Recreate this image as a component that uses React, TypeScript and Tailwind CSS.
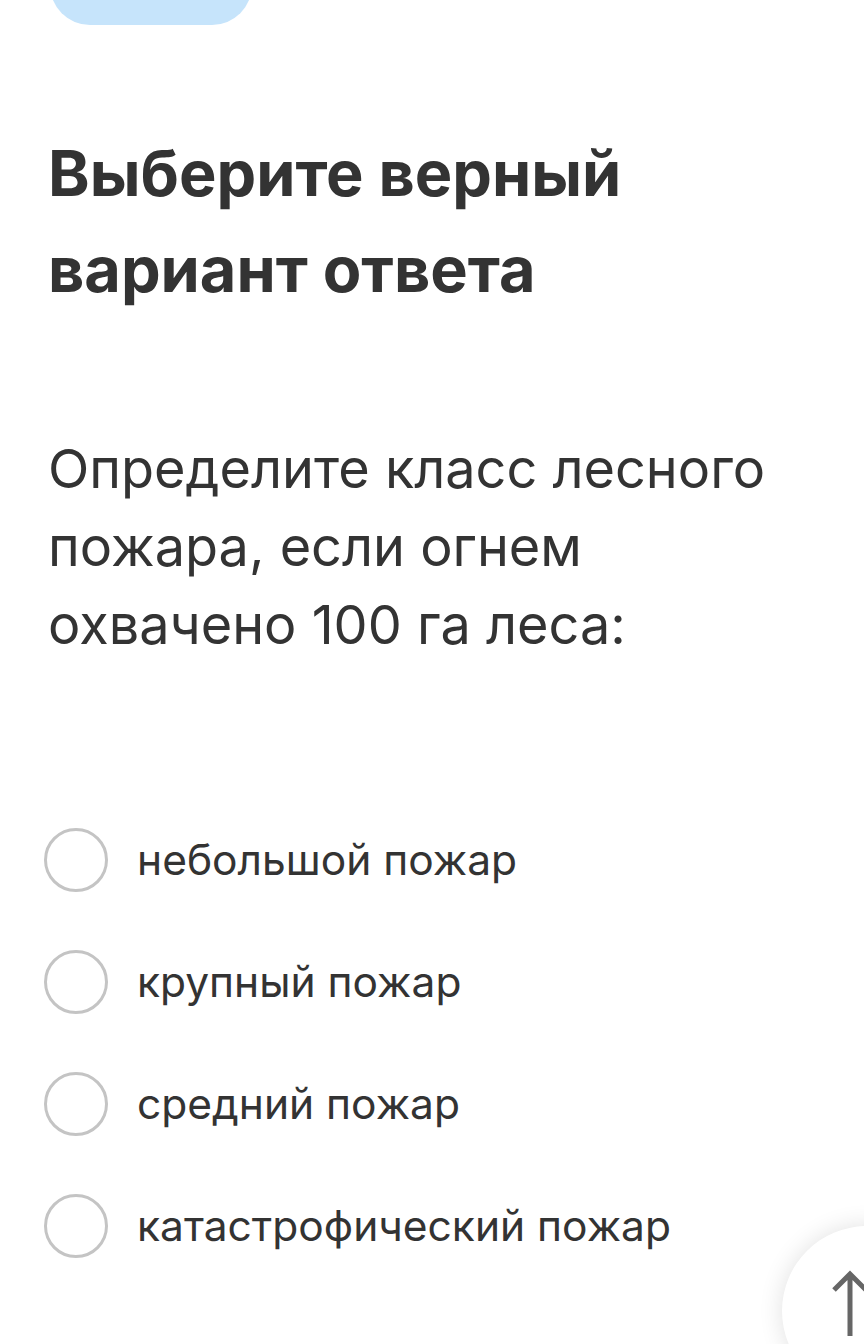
import React from 'react';

const options = ['небольшой пожар', 'крупный пожар', 'средний пожар', 'катастрофический пожар'];

const RadioOption: React.FC<{ label: string }> = ({ label }) => (
  <label className="flex items-center h-[122px] cursor-pointer">
    <span className="w-[64px] h-[64px] rounded-full border-[3px] border-[#c4c4c4] bg-white shrink-0" />
    <span className="ml-[29px] text-[42.5px] leading-none text-[#333333]">{label}</span>
  </label>
);

export default function App() {
  return (
    <div
      className="relative w-[864px] h-[1344px] overflow-hidden bg-white text-[#333333]"
      style={{ fontFamily: 'Inter, "Noto Sans", sans-serif' }}
    >
      <div className="ml-[50px] -mt-[55px] w-[202px] h-[80px] rounded-[40px] bg-[#c6e4fb]" />

      <div className="px-[48px]">
        <h1 className="mt-[100px] text-[63px] leading-[96px] font-bold text-[#333333]">
          Выберите верный
          <br />
          вариант ответа
        </h1>

        <p className="mt-[113px] text-[54px] leading-[78px] font-normal text-[#333333]">
          Определите класс лесного
          <br />
          пожара, если огнем
          <br />
          охвачено 100 га леса:
        </p>

        <div className="mt-[135px] -ml-[4px] flex flex-col">
          {options.map((o) => (
            <RadioOption key={o} label={o} />
          ))}
        </div>
      </div>

      <button className="absolute left-[782px] top-[1226px] w-[170px] h-[170px] rounded-full bg-white shadow-[0_0_24px_rgba(0,0,0,0.12)]">
        <svg className="absolute left-[48px] top-[44px]" width="40" height="70" viewBox="0 0 40 70">
          <path d="M20 4 V66 M4 20 L20 4 L36 20" fill="none" stroke="#666666" strokeWidth="5" />
        </svg>
      </button>
    </div>
  );
}
